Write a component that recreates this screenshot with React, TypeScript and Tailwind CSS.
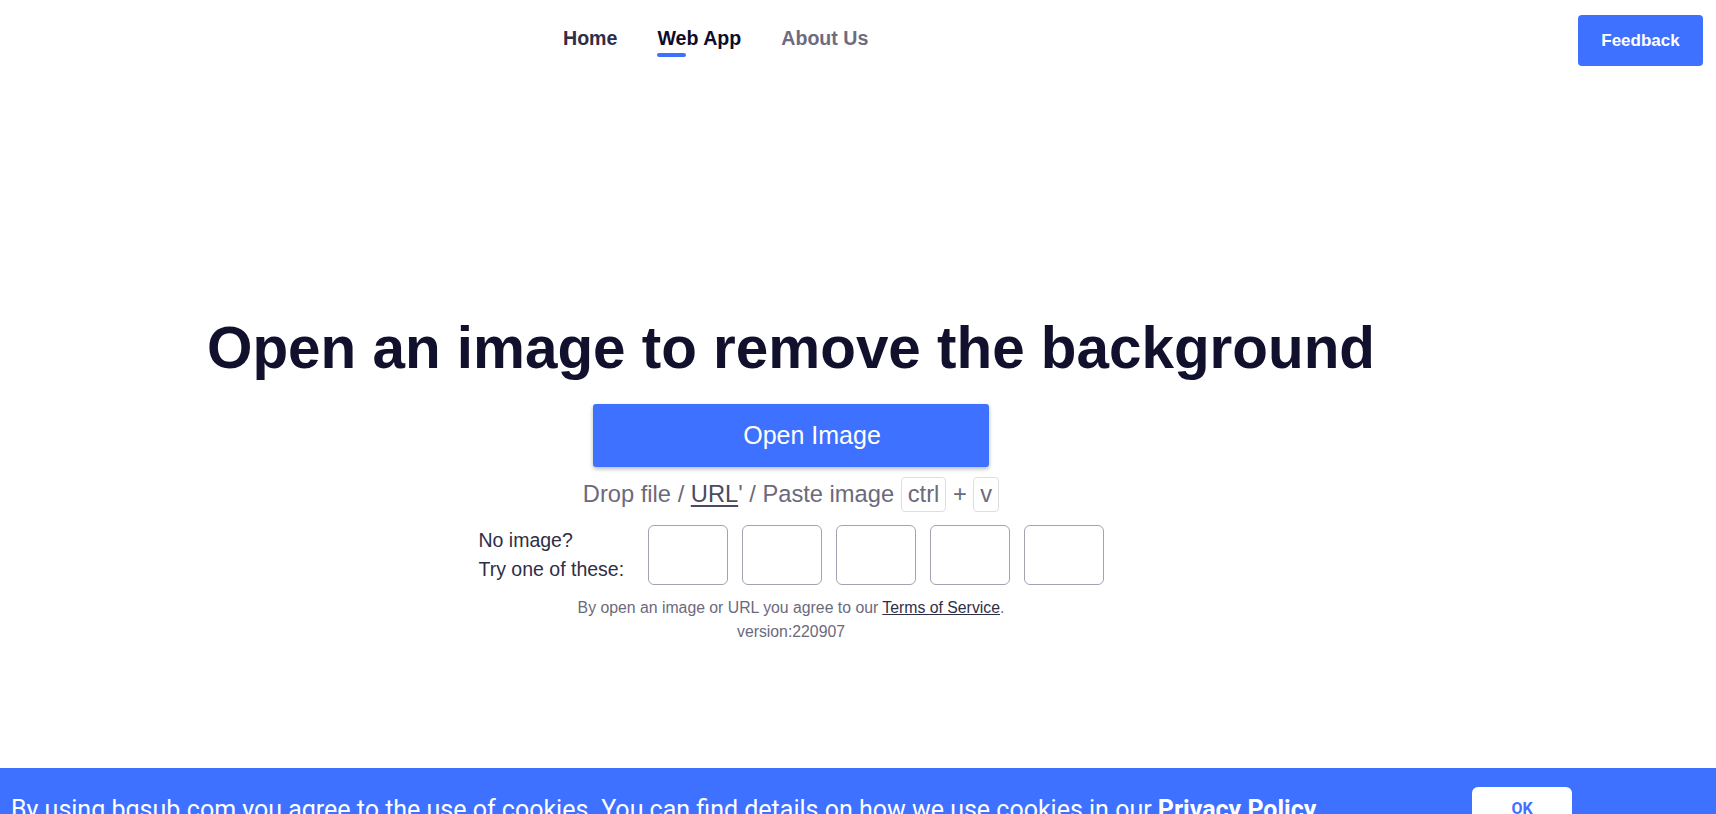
import React from 'react';

const sans = "font-['Liberation_Sans',Arial,sans-serif]";

export default function App() {
  const samples = [1, 2, 3, 4, 5];

  return (
    <div className={`min-h-screen bg-white ${sans} overflow-hidden`}>

      {/* HEADER */}
      <div className="flex h-[70px]">
        <nav className="flex gap-[40px] pl-[563px]">
          <a className="pt-[26px] text-[19.6px] leading-[24px] font-bold text-[#2e2e47]">Home</a>
          <a className="pt-[26px] flex flex-col text-[19.6px] leading-[24px] font-bold text-[#0d0c2b]">
            Web App
            <span className="mt-[3px] h-[4px] w-[29px] rounded-full bg-[#3e71ff]" />
          </a>
          <a className="pt-[26px] text-[19.6px] leading-[24px] font-bold text-[#6d6b80]">About Us</a>
        </nav>
        <button className="ml-auto mr-[13px] mt-[15px] h-[51px] w-[125px] rounded-[4px] bg-[#3e71ff] text-[17px] font-bold text-white">
          Feedback
        </button>
      </div>

      {/* MAIN */}
      <div className="h-[698px] w-[1582px] flex flex-col items-center pt-[243px]">
        <h1 className="text-[58.4px] leading-[70px] font-bold text-[#11102d]">
          Open an image to remove the background
        </h1>

        <button className="mt-[21px] h-[63px] w-[396px] pl-[42px] rounded-[3px] bg-[#3e71ff] text-[25px] text-white shadow-[0_2px_4px_rgba(0,0,0,0.28)]">
          Open Image
        </button>

        <div className="mt-[10px] flex items-center h-[35px] text-[23.7px] text-[#6b6a7c] whitespace-pre">
          {'Drop file / '}
          <span className="underline underline-offset-[3px] text-[#4b4a5e]">URL</span>
          {"' / Paste image "}
          <span className="inline-flex items-center h-[35px] px-[6px] border border-[#dddde3] rounded-[4px]">ctrl</span>
          {' + '}
          <span className="inline-flex items-center h-[35px] px-[6px] border border-[#dddde3] rounded-[4px]">v</span>
        </div>

        <div className="mt-[13px] flex items-center">
          <div className="w-[169px] text-[19.5px] leading-[29px] text-[#2e2e47]">
            <p>No image?</p>
            <p>Try one of these:</p>
          </div>
          <div className="flex gap-[14px]">
            {samples.map(s => (
              <button
                key={s}
                className="h-[60px] w-[80px] rounded-[6px] border border-[#a3a2b3] bg-white"
              />
            ))}
          </div>
        </div>

        <p className="mt-[11px] text-[15.8px] leading-[24px] text-[#6b6a7c]">
          By open an image or URL you agree to our{' '}
          <a className="underline text-[#2e2e47]">Terms of Service</a>.
        </p>
        <p className="text-[15.8px] leading-[24px] text-[#6b6a7c]">version:220907</p>
      </div>

      {/* COOKIE BANNER */}
      <div className="bg-[#3e71ff] pt-[19px] pb-[19px] pl-[11px] pr-[144px] flex items-center justify-between font-['Roboto',sans-serif]">
        <p className="text-[25px] leading-[37px] text-white whitespace-nowrap">
          By using bgsub.com you agree to the use of cookies. You can find details on how we use cookies in our{' '}
          <a className="font-bold">Privacy Policy</a>.
        </p>
        <button className="h-[44px] w-[100px] rounded-[6px] bg-white text-[16px] font-bold text-[#3e71ff]">
          OK
        </button>
      </div>

    </div>
  );
}
